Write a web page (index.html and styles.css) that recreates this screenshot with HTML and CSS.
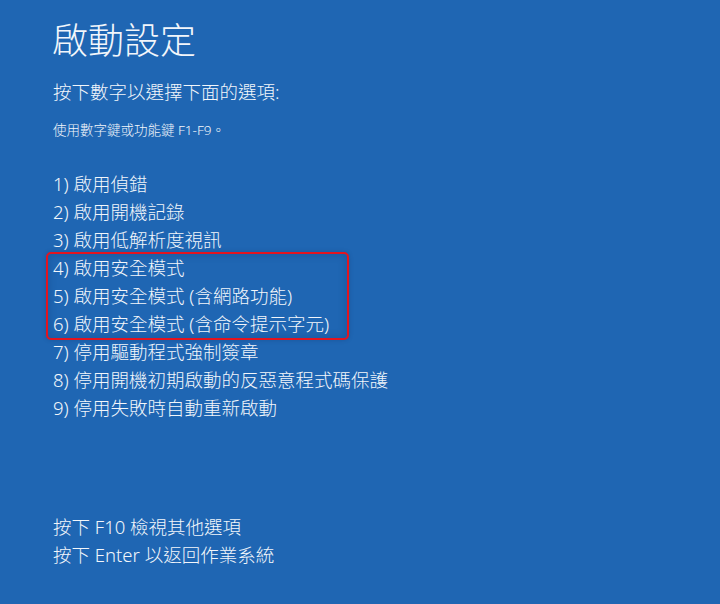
FILE: index.html
```html
<!DOCTYPE html>
<html lang="zh-Hant">
<head>
<meta charset="utf-8">
<title>啟動設定</title>
<link rel="stylesheet" href="styles.css">
</head>
<body>
<main class="screen">
  <h1 class="title">啟動設定</h1>
  <p class="prompt">按下數字以選擇下面的選項:</p>
  <p class="hint">使用數字鍵或功能鍵 F1-F9。</p>
  <ul class="options">
    <li>1) 啟用偵錯</li>
    <li>2) 啟用開機記錄</li>
    <li>3) 啟用低解析度視訊</li>
    <li class="highlight">
      <ul class="group">
        <li>4) 啟用安全模式</li>
        <li>5) 啟用安全模式 (含網路功能)</li>
        <li>6) 啟用安全模式 (含命令提示字元)</li>
      </ul>
    </li>
    <li>7) 停用驅動程式強制簽章</li>
    <li>8) 停用開機初期啟動的反惡意程式碼保護</li>
    <li>9) 停用失敗時自動重新啟動</li>
  </ul>
  <div class="footer">
    <p>按下 F10 檢視其他選項</p>
    <p>按下 Enter 以返回作業系統</p>
  </div>
</main>
</body>
</html>
```

FILE: styles.css
```css
html, body {
  margin: 0;
  padding: 0;
  background: #1f66b3;
}

body {
  width: 720px;
  height: 604px;
  overflow: hidden;
  color: #f2f6fb;
  font-family: "Noto Sans", "Noto Sans CJK TC", sans-serif;
}

.screen {
  padding: 16px 0 0 53px;
}

.title {
  margin: 0 0 0 -1px;
  font-size: 36px;
  line-height: 44px;
  font-weight: 300;
  font-family: "Noto Sans CJK TC", sans-serif;
}

.prompt {
  margin: 18px 0 0;
  font-size: 18.5px;
  line-height: 28px;
  font-weight: 300;
}

.hint {
  margin: 14px 0 0;
  font-size: 13.5px;
  line-height: 20px;
  font-weight: 300;
}

.options {
  list-style: none;
  margin: 30px 0 0;
  padding: 0;
}

.options li {
  font-size: 18.5px;
  line-height: 28px;
  font-weight: 300;
  white-space: nowrap;
}

.options .highlight {
  width: 303px;
  box-sizing: border-box;
  margin: -2px 0 -2px -7px;
  padding-left: 5px;
  border: 2px solid #e3141f;
  border-radius: 5px;
  box-shadow: inset 0 0 8px rgba(10, 40, 90, 0.25), 0 0 4px rgba(10, 40, 90, 0.25);
}

.group {
  list-style: none;
  margin: 0;
  padding: 0;
}

.footer {
  margin-top: 91px;
}

.footer p {
  margin: 0;
  font-size: 18.5px;
  line-height: 28px;
  font-weight: 300;
}
```
